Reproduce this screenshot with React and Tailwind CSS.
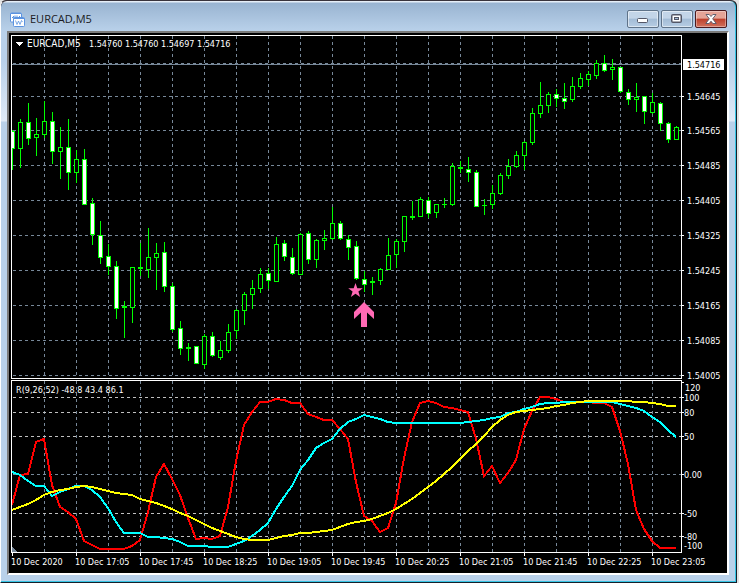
// Candles are 8px apart: [high, bodyTop, bodyBottom, low, kind]
// kind: 1 = bull (hollow), 0 = bear (white)
const CANDLES = [
    [130, 131, 148, 169, 0], [119, 122, 148, 167, 1], [103, 122, 138, 144, 0], [118, 134, 137, 155, 1],
    [101, 121, 134, 137, 1], [112, 121, 151, 163, 0], [127, 147, 151, 178, 1], [119, 147, 172, 189, 0],
    [150, 159, 172, 182, 1], [149, 159, 204, 204, 0], [198, 203, 234, 244, 0], [221, 235, 257, 263, 0],
    [244, 256, 266, 274, 0], [261, 266, 308, 318, 0], [301, 306, 307, 337, 1], [267, 267, 307, 322, 1],
    [243, 267, 268, 275, 1], [228, 257, 269, 277, 1], [243, 253, 257, 289, 1], [242, 252, 286, 291, 0],
    [283, 286, 329, 331, 0], [321, 328, 348, 354, 0], [343, 347, 348, 360, 1], [346, 346, 363, 363, 0],
    [334, 336, 364, 368, 1], [332, 336, 355, 356, 0], [341, 350, 357, 359, 1], [324, 332, 350, 352, 1],
    [309, 310, 330, 338, 1], [292, 294, 310, 324, 1], [280, 288, 294, 308, 1], [268, 274, 288, 292, 1],
    [268, 273, 280, 288, 0], [237, 244, 281, 281, 1], [240, 243, 256, 260, 0], [248, 257, 273, 274, 0],
    [233, 234, 274, 274, 1], [231, 233, 259, 263, 0], [239, 240, 259, 267, 1], [230, 238, 240, 249, 1],
    [207, 223, 238, 239, 1], [221, 223, 238, 239, 0], [235, 239, 247, 259, 0], [241, 246, 278, 279, 0],
    [271, 279, 284, 291, 0], [277, 281, 282, 294, 1], [268, 269, 280, 284, 1], [238, 255, 269, 269, 1],
    [239, 241, 254, 267, 1], [216, 216, 241, 251, 1], [201, 216, 217, 219, 1], [197, 199, 216, 216, 1],
    [197, 200, 213, 217, 0], [204, 204, 212, 217, 1], [198, 204, 204, 207, 1], [163, 166, 204, 205, 1],
    [161, 167, 168, 172, 1], [157, 169, 172, 181, 0], [170, 172, 206, 206, 0], [199, 205, 205, 214, 1],
    [185, 193, 204, 208, 1], [173, 175, 193, 194, 1], [159, 166, 175, 178, 1], [151, 155, 166, 167, 1],
    [141, 142, 155, 169, 1], [108, 113, 142, 144, 1], [82, 105, 113, 117, 1], [92, 94, 105, 112, 1],
    [89, 94, 98, 106, 0], [83, 98, 101, 108, 0], [77, 86, 99, 101, 1], [73, 78, 86, 88, 1],
    [71, 74, 79, 85, 1], [60, 63, 75, 78, 1], [55, 63, 70, 71, 0], [59, 67, 69, 79, 1],
    [67, 67, 91, 92, 0], [89, 92, 99, 104, 0], [83, 97, 99, 111, 1], [96, 96, 111, 123, 0],
    [93, 102, 112, 113, 1], [102, 103, 123, 130, 0], [122, 123, 139, 142, 0], [126, 127, 139, 139, 1],
];

// Indicator values, one per candle
const FAST = [
    505, 475, 474, 442, 439, 485, 507, 512, 519, 541, 545, 549, 549, 549, 549, 546, 540, 512, 477, 464, 479,
    495, 518, 539, 538, 539, 536, 507, 461, 425, 412, 402, 402, 399, 400, 403, 403, 414, 417, 420, 420, 429,
    439, 482, 516, 521, 532, 528, 503, 458, 422, 403, 401, 403, 407, 408, 410, 412, 439, 476, 466, 483, 473,
    460, 429, 411, 397, 397, 399, 402, 402, 402, 402, 403, 403, 407, 431, 464, 510, 529, 541, 548, 548, 548,
];
const MID = [
    472, 475, 481, 486, 486, 496, 492, 489, 486, 486, 490, 497, 508, 522, 533, 533, 533, 537, 537, 538, 539,
    542, 546, 546, 546, 547, 547, 547, 544, 541, 536, 530, 523, 509, 497, 486, 470, 460, 448, 443, 439, 429,
    422, 419, 415, 417, 419, 422, 423, 423, 423, 423, 423, 423, 423, 423, 423, 422, 421, 420, 418, 417, 413,
    412, 409, 407, 404, 403, 403, 402, 402, 402, 402, 402, 402, 402, 404, 406, 408, 411, 417, 422, 430, 437,
];
const SLOW = [
    510, 507, 504, 500, 495, 492, 490, 489, 487, 486, 487, 489, 491, 493, 494, 495, 499, 501, 503, 506, 509,
    513, 516, 520, 524, 528, 531, 534, 537, 539, 540, 540, 540, 538, 536, 535, 533, 533, 532, 531, 530, 527,
    524, 522, 521, 519, 516, 513, 509, 504, 499, 493, 487, 481, 474, 467, 459, 451, 444, 436, 427, 420, 415,
    412, 411, 410, 409, 408, 406, 405, 403, 402, 401, 401, 401, 401, 401, 401, 402, 402, 403, 404, 406, 406,
];

const PRICES = [
    [63, null], [96, "1.54645"], [130, "1.54565"], [165, "1.54485"], [200, "1.54405"],
    [235, "1.54325"], [270, "1.54245"], [305, "1.54165"], [340, "1.54085"], [375, "1.54005"],
];
const LEVELS = [[397, "100"], [412, "80"], [436, "50"], [474, "0.00"], [513, "-50"], [536, "-80"]];
const TIMES = ["2020", "17:05", "17:45", "18:25", "19:05", "19:45", "20:25", "21:05", "21:45", "22:25", "23:05"];

const STEP = 8;
const X0 = 12;
const PANE = "block w-full h-auto overflow-visible font-['DejaVu_Sans_Condensed','DejaVu_Sans',sans-serif] text-[9px]";

function toPoints(values) {
    return values.map((y, i) => `${X0 + i * STEP},${y}`).join(" ");
}

function VerticalGrid({ from, to }) {
    return Array.from({ length: 20 }, (_, i) => 44 + i * 32).map((x) => (
        <line key={x} x1={x + 0.5} x2={x + 0.5} y1={from} y2={to} stroke="#778899" strokeDasharray="3 3" />
    ));
}

function Candle({ x, data }) {
    const [high, top, bottom, low, bull] = data;
    return (
        <g>
            <rect x={x} y={high} width="1" height={low - high + 1} fill="#00ff00" />
            <rect x={x - 2} y={top} width="5" height={bottom - top + 1} fill="#00ff00" />
            {bottom - top > 1 && (
                <rect x={x - 1} y={top + 1} width="3" height={bottom - top - 1} fill={bull ? "#000" : "#fff"} />
            )}
        </g>
    );
}

function PricePane() {
    return (
        <svg viewBox="9 33 718 346" className={PANE} shapeRendering="crispEdges" role="img" aria-label="EURCAD price">
            <defs>
                <clipPath id="plot">
                    <rect x="12" y="36" width="669" height="342" />
                </clipPath>
            </defs>
            <VerticalGrid from={36} to={378} />
            {PRICES.map(([y]) => (
                <line key={y} x1="13" x2="681" y1={y + 0.5} y2={y + 0.5} stroke="#778899" strokeDasharray="3 3" />
            ))}
            <rect x="12" y="64" width="669" height="1" fill="#778899" />

            <g clipPath="url(#plot)">
                {CANDLES.map((c, i) => (
                    <Candle key={i} x={X0 + i * STEP} data={c} />
                ))}
            </g>

            {/* signal marks */}
            <g fill="#ff69b4" shapeRendering="auto">
                <path d="M355.500 283l1.800 5.200h5.500l-4.400 3.400 1.700 5.400-4.600-3.300-4.600 3.300 1.700-5.400-4.400-3.400h5.500z" />
                <path d="M364 302l10 10v7l-7-6.500v14.500h-6v-14.500l-7 6.500v-7z" />
            </g>

            <rect x="11.500" y="35.500" width="670" height="343" fill="none" stroke="#fff" />

            <path d="M15 42h8l-4 4z" fill="#fff" />
            <g fill="#fff">
                <text x="27" y="47" className="text-[10px]">EURCAD,M5</text>
                <text x="89" y="47">1.54760</text>
                <text x="125" y="47">1.54760</text>
                <text x="161" y="47">1.54697</text>
                <text x="197" y="47">1.54716</text>
                {PRICES.filter(([, label]) => label).map(([y, label]) => (
                    <g key={y}>
                        <rect x="682" y={y} width="2" height="1" />
                        <text x="687" y={y + 4}>{label}</text>
                    </g>
                ))}
                <rect x="683" y="59" width="41" height="11" />
            </g>
            <text x="687" y="68" fill="#000">1.54716</text>
        </svg>
    );
}

function IndicatorPane() {
    return (
        <svg viewBox="9 379 718 174" className={PANE} shapeRendering="crispEdges" role="img" aria-label="R indicator">
            <VerticalGrid from={381} to={552} />
            {LEVELS.map(([y, label]) => (
                <line key={y} x1="13" x2="681" y1={y + 0.5} y2={y + 0.5} stroke={label === "0.00" ? "#778899" : "#c0c0c0"} strokeDasharray="3 3" />
            ))}
            <path d="M12 547l5 5h-5z" fill="#778899" />

            <g fill="none" strokeWidth="2">
                <polyline points={toPoints(FAST)} stroke="#ff0000" />
                <polyline points={toPoints(MID)} stroke="#00ffff" />
                <polyline points={toPoints(SLOW)} stroke="#ffff00" />
            </g>

            <rect x="11.500" y="380.500" width="670" height="172" fill="none" stroke="#fff" />

            <g fill="#fff">
                <text x="16" y="393">R(9,26,52) -48.8 43.4 86.1</text>
                <rect x="682" y="382" width="2" height="1" />
                <text x="685" y="391">120</text>
                {LEVELS.map(([y, label]) => (
                    <g key={y}>
                        <rect x="682" y={y} width="2" height="1" />
                        <text x="684" y={y + 4}>{label}</text>
                    </g>
                ))}
                <text x="684" y="549">-100</text>
            </g>
        </svg>
    );
}

function TimeAxis() {
    return (
        <svg viewBox="9 553 718 20" className={PANE} shapeRendering="crispEdges" role="img" aria-label="Time">
            <g fill="#fff">
                {TIMES.map((t, i) => (
                    <g key={t}>
                        <rect x={X0 + i * 64} y="553" width="1" height="3" />
                        <text x={X0 + i * 64 - 1} y="565">10 Dec {t}</text>
                    </g>
                ))}
            </g>
        </svg>
    );
}

function ChartIcon() {
    return (
        <svg viewBox="0 0 15 15" className="w-[15px] h-[15px]" aria-hidden="true">
            <rect x="0.5" y="1" width="11" height="9" rx="1" fill="#fff" stroke="#5b93e0" />
            <path d="M1 1.500h10" stroke="#5b93e0" />
            <path d="M2 5.500h1.500v-1.500m1.500 2v-2.500m2 2v-2m2 1h1" fill="none" stroke="#5b93e0" />
            <rect x="3.500" y="5.500" width="11" height="9" rx="1" fill="#fff" stroke="#5b93e0" />
            <path d="M3.500 6.500h11" stroke="#5b93e0" />
            <path d="M5.500 8.500l1.500 4 1.500-3.500 1.500 3.500 1.500-4 1 1.500" fill="none" stroke="#5b93e0" strokeWidth="0.800" />
        </svg>
    );
}

function WindowButton({ label, close, children }) {
    return (
        <button
            type="button"
            aria-label={label}
            className={`flex h-[18px] w-8 items-center justify-center rounded-[2px] border ${
                close
                    ? "border-[#4b1a1f] bg-linear-to-b from-[#e5a497] from-45% via-[#bd3f2b] via-50% to-[#d0705c] shadow-[inset_0_0_0_1px_rgba(255,255,255,0.35)]"
                    : "border-[#5f7389] bg-linear-to-b from-[#c3d5e8] from-45% via-[#a3bcd6] via-50% to-[#b7cde4] shadow-[inset_0_0_0_1px_rgba(255,255,255,0.5)]"
            }`}
        >
            {children}
        </button>
    );
}

export default function App() {
    return (
        <div className="bg-[#e4e4e4] pr-[2px]">
            <div className="rounded-t-md border border-t-[#39343c] border-r-[#15202b] border-b-[#15202b] border-l-white bg-[#39343c]">
                <div className="rounded-t-md border-r border-b border-[#35c4e4] px-[6px] pb-[6px] bg-[linear-gradient(to_bottom,#e6eef7_0px,#e6eef7_1px,#99b4d1_2px,#b9d1ea_30px,#b9d1ea_60px,#dfeaf7_120px,#b9d1ea_121px)]">
                    <header className="flex h-[30px] items-center justify-between pt-[6px]">
                        <div className="flex items-center gap-[5px] pl-[3px]">
                            <ChartIcon />
                            <h1 className="font-['Open_Sans','Noto_Sans',sans-serif] text-[11px] leading-4 text-[#1b1b22]">EURCAD,M5</h1>
                        </div>
                        <div className="flex gap-[2px] pr-[2px]">
                            <WindowButton label="Minimize">
                                <svg viewBox="0 0 12 8" className="w-3 h-2">
                                    <rect x="0.5" y="3.500" width="10" height="4" rx="1" fill="#fff" stroke="#535666" />
                                </svg>
                            </WindowButton>
                            <WindowButton label="Restore">
                                <svg viewBox="0 0 12 10" className="w-3 h-[10px]">
                                    <rect x="1" y="1" width="9" height="7" rx="1" fill="none" stroke="#535666" strokeWidth="2" />
                                    <rect x="1.500" y="1.500" width="8" height="6" fill="#fff" />
                                    <rect x="3.500" y="3.500" width="4" height="2" fill="#a3bcd6" stroke="#535666" />
                                </svg>
                            </WindowButton>
                            <WindowButton label="Close" close>
                                <svg viewBox="0 0 12 10" className="w-3 h-[10px]">
                                    <path d="M1 0.500h3.200l1.800 2 1.800-2h3.200l-3.300 4.300 3.500 4.700h-3.400l-1.800-2.300-1.800 2.300h-3.400l3.500-4.700z" fill="#fff" stroke="#535666" strokeWidth="0.900" />
                                </svg>
                            </WindowButton>
                        </div>
                    </header>

                    <main className="border-2 border-t-[#7b7b7b] border-l-[#7b7b7b] border-r-white border-b-white bg-black">
                        <PricePane />
                        <IndicatorPane />
                        <TimeAxis />
                    </main>
                </div>
            </div>
        </div>
    );
}
